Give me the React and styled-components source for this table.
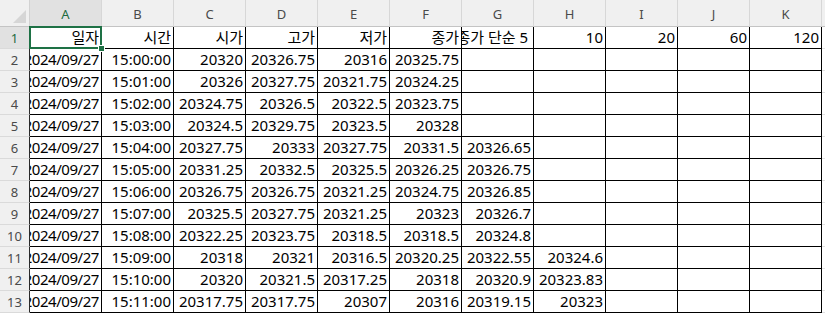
import React from "react";
import styled, { createGlobalStyle } from "styled-components";

const GlobalStyle = createGlobalStyle`
  html, body {
    margin: 0;
    padding: 0;
    background: #fff;
  }
  body {
    font-family: "Noto Sans", "Noto Sans CJK KR", sans-serif;
    overflow: hidden;
  }
`;

const columns = ["A", "B", "C", "D", "E", "F", "G", "H", "I", "J", "K"];

const rows = [
  ["일자", "시간", "시가", "고가", "저가", "종가", "이동평균 종가 단순 5", "10", "20", "60", "120"],
  ["2024/09/27", "15:00:00", "20320", "20326.75", "20316", "20325.75"],
  ["2024/09/27", "15:01:00", "20326", "20327.75", "20321.75", "20324.25"],
  ["2024/09/27", "15:02:00", "20324.75", "20326.5", "20322.5", "20323.75"],
  ["2024/09/27", "15:03:00", "20324.5", "20329.75", "20323.5", "20328"],
  ["2024/09/27", "15:04:00", "20327.75", "20333", "20327.75", "20331.5", "20326.65"],
  ["2024/09/27", "15:05:00", "20331.25", "20332.5", "20325.5", "20326.25", "20326.75"],
  ["2024/09/27", "15:06:00", "20326.75", "20326.75", "20321.25", "20324.75", "20326.85"],
  ["2024/09/27", "15:07:00", "20325.5", "20327.75", "20321.25", "20323", "20326.7"],
  ["2024/09/27", "15:08:00", "20322.25", "20323.75", "20318.5", "20318.5", "20324.8"],
  ["2024/09/27", "15:09:00", "20318", "20321", "20316.5", "20320.25", "20322.55", "20324.6"],
  ["2024/09/27", "15:10:00", "20320", "20321.5", "20317.25", "20318", "20320.9", "20323.83"],
  ["2024/09/27", "15:11:00", "20317.75", "20317.75", "20307", "20316", "20319.15", "20323"],
];

const Sheet = styled.div`
  display: grid;
  grid-template-columns: 30px repeat(11, 72px) 1fr;
  grid-template-rows: 27px;
  grid-auto-rows: 22px;
  width: 825px;
  height: 313px;
  overflow: hidden;
`;

const Corner = styled.div`
  position: relative;
  background: #f0f0f0;
  border-right: 1px solid #d2d2d2;
  border-bottom: 1px solid #c4c4c4;
  box-sizing: border-box;

  &::after {
    content: "";
    position: absolute;
    right: 3px;
    bottom: 3px;
    border-style: solid;
    border-width: 0 0 13px 13px;
    border-color: transparent transparent #d6d6d6 transparent;
  }
`;

const ColHeader = styled.div`
  display: flex;
  align-items: center;
  justify-content: center;
  padding-top: 1px;
  box-sizing: border-box;
  background: ${(p) => (p.$selected ? "#e1e1e1" : "#f0f0f0")};
  color: ${(p) => (p.$selected ? "#1d6b3f" : "#4a4a4a")};
  border-right: 1px solid #d7d7d7;
  border-bottom: 1px solid #c4c4c4;
  font-size: 13px;
`;

const RowHeader = styled.div`
  display: flex;
  align-items: center;
  justify-content: center;
  box-sizing: border-box;
  background: ${(p) => (p.$selected ? "#e1e1e1" : "#f0f0f0")};
  color: ${(p) => (p.$selected ? "#1d6b3f" : "#4a4a4a")};
  border-bottom: 1px solid #dadada;
  border-right: 1px solid #2a2a2a;
  font-size: 13px;
`;

const Cell = styled.div`
  position: relative;
  display: flex;
  align-items: center;
  justify-content: flex-end;
  box-sizing: border-box;
  padding-right: ${(p) => (p.$wide ? "5px" : "2px")};
  border-right: 1px solid #000;
  border-bottom: 1px solid #000;
  overflow: ${(p) => (p.$active ? "visible" : "hidden")};
  white-space: nowrap;
  font-size: 15px;
  line-height: 1;
  color: #000;
  letter-spacing: ${(p) => (p.$tight ? "-0.45px" : "0")};
`;

const Clip = styled.span`
  display: flex;
  justify-content: flex-end;
  overflow: hidden;
  width: 100%;
`;

const Filler = styled.div`
  box-sizing: border-box;
  background: ${(p) => (p.$header ? "#f0f0f0" : "#fff")};
  border-bottom: 1px solid ${(p) => (p.$header ? "#c4c4c4" : "#e1e1e1")};
`;

const ActiveFrame = styled.div`
  position: absolute;
  left: -1px;
  top: -1px;
  right: -1px;
  bottom: -1px;
  border: 2px solid #1e7145;
  pointer-events: none;
  z-index: 2;

  &::after {
    content: "";
    position: absolute;
    right: -5px;
    bottom: -5px;
    width: 5px;
    height: 5px;
    background: #1e7145;
    border: 1px solid #fff;
  }
`;

export default function App() {
  return (
    <>
      <GlobalStyle />
      <Sheet>
        <Corner />
        {columns.map((c) => (
          <ColHeader key={c} $selected={c === "A"}>
            {c}
          </ColHeader>
        ))}
        <Filler $header />
        {rows.map((row, r) => (
          <React.Fragment key={r}>
            <RowHeader $selected={r === 0}>{r + 1}</RowHeader>
            {columns.map((c, i) => {
              const active = r === 0 && i === 0;
              return (
                <Cell
                  key={c}
                  $active={active}
                  $tight={r > 0 && i === 0}
                  $wide={r === 0 && i === 6}
                >
                  <Clip>{row[i] || ""}</Clip>
                  {active && <ActiveFrame />}
                </Cell>
              );
            })}
            <Filler />
          </React.Fragment>
        ))}
      </Sheet>
    </>
  );
}
